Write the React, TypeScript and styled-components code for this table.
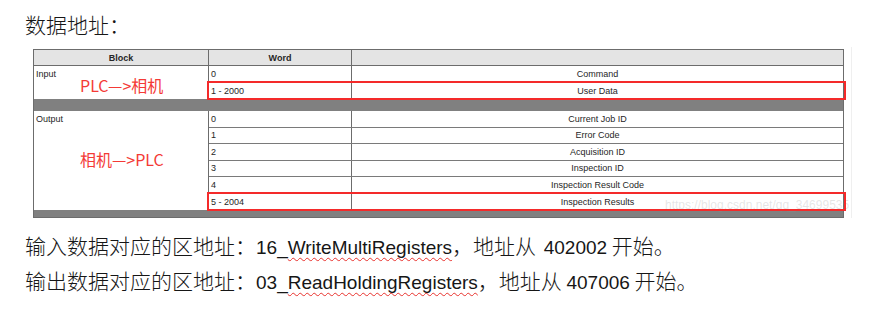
import React from "react";
import styled, { createGlobalStyle, css } from "styled-components";

const GlobalStyle = createGlobalStyle`
  html, body { margin: 0; padding: 0; background: #ffffff; }
  body {
    width: 885px;
    height: 313px;
    overflow: hidden;
    font-family: "Noto Sans CJK SC", sans-serif;
    color: #161616;
  }
  * { box-sizing: border-box; }
`;

const Page = styled.main`
  padding: 12px 0 0 25px;
`;

const Heading = styled.h1`
  margin: 0;
  font-size: 21px;
  font-weight: 300;
  line-height: 24px;
`;

/* pasted screenshot of the register map */
const Shot = styled.figure`
  position: relative;
  margin: 11px 0 0 3px;
  width: 824px;
  padding: 2px 7px 0 5px;
  border-right: 1px solid #efefef;
`;

const Table = styled.div`
  width: 811px;
  border: 1px solid #6c6c6c;
  font-family: "Liberation Sans", Arial, sans-serif;
  font-size: 9px;
  color: #262626;
`;

const HeaderRow = styled.div`
  display: grid;
  grid-template-columns: 175px 143px 1fr;
  height: 16px;
  background: #e4e4e4;
  border-bottom: 1px solid #6c6c6c;
`;

const HeadCell = styled.div`
  display: flex;
  align-items: center;
  justify-content: center;
  font-weight: 700;
  border-right: 1px solid #6c6c6c;
  &:last-child { border-right: none; }
`;

const Section = styled.div`
  display: grid;
  grid-template-columns: 175px 1fr;
`;

const BlockCell = styled.div`
  display: flex;
  flex-direction: column;
  border-right: 1px solid #6c6c6c;
  padding-left: 2px;
`;

const BlockLabel = styled.span`
  line-height: 16.5px;
`;

const Note = styled.span<{ $offset: number }>`
  margin: ${(p) => p.$offset}px 0 0 44px;
  font-family: "Noto Sans CJK SC", sans-serif;
  font-size: 16px;
  line-height: 20px;
  color: #f43a36;
  white-space: nowrap;
`;

const Row = styled.div<{ $marked?: boolean }>`
  position: relative;
  display: grid;
  grid-template-columns: 143px 1fr;
  height: 16.5px;
  border-bottom: 1px solid #7a7a7a;
  &:last-child { border-bottom: none; }
  ${(p) =>
    p.$marked &&
    css`
      &::after {
        content: "";
        position: absolute;
        inset: -2px -3px -1px -2px;
        border: 2px solid #f42a2a;
        z-index: 2;
        pointer-events: none;
      }
    `}
`;

const WordCell = styled.div`
  display: flex;
  align-items: center;
  padding-left: 2px;
  border-right: 1px solid #6c6c6c;
`;

const DescCell = styled.div`
  display: flex;
  align-items: center;
  justify-content: center;
`;

const Band = styled.div<{ $h: number }>`
  height: ${(p) => p.$h}px;
  background: #808080;
`;

const Watermark = styled.span`
  position: absolute;
  left: 637px;
  top: 151px;
  z-index: 1;
  font-family: "Liberation Sans", Arial, sans-serif;
  font-size: 12px;
  line-height: 14px;
  color: rgba(150, 150, 150, 0.25);
  white-space: nowrap;
`;

const Notes = styled.div`
  margin-top: 10.5px;
  font-size: 21px;
  font-weight: 300;
  line-height: 32px;
  white-space: nowrap;
`;

const Line = styled.div``;

const Latin = styled.span`
  font-family: "Liberation Sans", Arial, sans-serif;
  font-weight: 400;
  font-size: 19px;
`;

const Number = styled(Latin)`
  margin-left: 3px;
`;

const Misspelled = styled.span`
  text-decoration: underline wavy #e8322d;
  text-decoration-thickness: 1px;
  text-underline-offset: 3px;
  text-decoration-skip-ink: none;
`;

type Entry = { word: string; desc: string; marked?: boolean };

const inputs: Entry[] = [
  { word: "0", desc: "Command" },
  { word: "1 - 2000", desc: "User Data", marked: true },
];

const outputs: Entry[] = [
  { word: "0", desc: "Current Job ID" },
  { word: "1", desc: "Error Code" },
  { word: "2", desc: "Acquisition ID" },
  { word: "3", desc: "Inspection ID" },
  { word: "4", desc: "Inspection Result Code" },
  { word: "5 - 2004", desc: "Inspection Results", marked: true },
];

function Block({
  label,
  note,
  offset,
  rows,
}: {
  label: string;
  note: string;
  offset: number;
  rows: Entry[];
}) {
  return (
    <Section>
      <BlockCell>
        <BlockLabel>{label}</BlockLabel>
        <Note $offset={offset}>{note}</Note>
      </BlockCell>
      <div>
        {rows.map((r) => (
          <Row key={r.word} $marked={r.marked}>
            <WordCell>{r.word}</WordCell>
            <DescCell>{r.desc}</DescCell>
          </Row>
        ))}
      </div>
    </Section>
  );
}

export default function App() {
  return (
    <>
      <GlobalStyle />
      <Page>
        <Heading>数据地址：</Heading>
        <Shot>
          <Table>
            <HeaderRow>
              <HeadCell>Block</HeadCell>
              <HeadCell>Word</HeadCell>
              <HeadCell />
            </HeaderRow>
            <Block label="Input" note="PLC—>相机" offset={-7.5} rows={inputs} />
            <Band $h={12} />
            <Block label="Output" note="相机—>PLC" offset={21.5} rows={outputs} />
            <Band $h={7} />
          </Table>
          <Watermark>https://blog.csdn.net/qq_34699535</Watermark>
        </Shot>
        <Notes>
          <Line>
            输入数据对应的区地址：
            <Latin>
              16_<Misspelled>WriteMultiRegisters</Misspelled>
            </Latin>
            ，地址从 <Number>402002</Number> 开始。
          </Line>
          <Line>
            输出数据对应的区地址：
            <Latin>
              03_<Misspelled>ReadHoldingRegisters</Misspelled>
            </Latin>
            ，地址从 <Latin>407006</Latin> 开始。
          </Line>
        </Notes>
      </Page>
    </>
  );
}
